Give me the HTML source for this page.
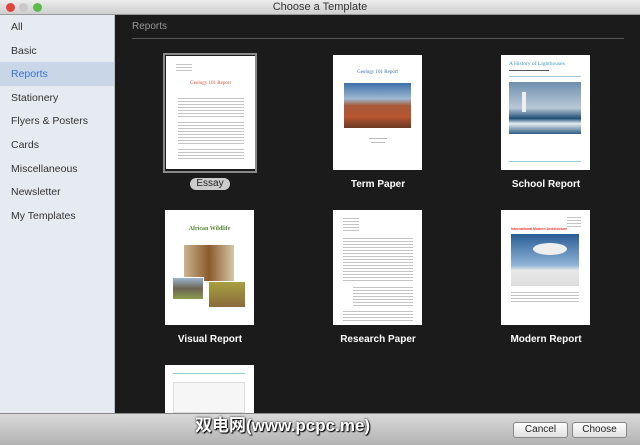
<!DOCTYPE html>
<html><head><meta charset="utf-8"><style>
*{margin:0;padding:0;box-sizing:border-box}
body{width:640px;height:445px;overflow:hidden;font-family:"Lucida Grande","Liberation Sans","Noto Sans CJK SC",sans-serif;background:#1b1b1b;position:relative}
.title{position:absolute;left:0;top:0;width:640px;height:15px;background:linear-gradient(#ececec,#cfcfcf);border-bottom:1px solid #999;text-align:center;font-size:11px;line-height:15px;color:#333}
.dot{position:absolute;top:3px;width:9px;height:9px;border-radius:50%}
.side{position:absolute;left:0;top:15px;width:115px;height:398px;background:#e6ebf1;border-right:1px solid #b9bfc7}
.side div{height:23.6px;line-height:24px;padding-left:11px;font-size:10.5px;color:#333}
.side .sel{background:#c9d6e8;color:#3a73c5}
.main{position:absolute;left:116px;top:15px;width:524px;height:398px;background:#1b1b1b}
.hdr{position:absolute;left:132px;top:21px;font-size:10px;color:#999}
.rule{position:absolute;left:132px;top:38px;width:492px;height:1px;background:#555}
.pg{position:absolute;width:89px;height:115px;background:#fff;overflow:hidden}
.lbl{position:absolute;width:170px;text-align:center;font-size:10px;font-weight:bold;color:#fff}
.ln{position:absolute;height:1px;background:#bbb}
.tx{position:absolute;background:repeating-linear-gradient(#fff 0 2px,#c4c4c4 2px 3px)}
.bot{position:absolute;left:0;top:413px;width:640px;height:32px;background:linear-gradient(#d9d9d9,#b3b3b3);border-top:1px solid #888}
.btn{position:absolute;top:8px;height:16px;border:1px solid #888;border-radius:3px;background:linear-gradient(#fdfdfd,#e0e0e0);font-size:10px;line-height:14px;text-align:center;color:#222}
.wm{position:absolute;left:195px;top:411px;font-size:17px;color:#fff;font-weight:bold;text-shadow:0 0 2px #000,1px 1px 1px #000}
</style></head><body>
<div class="title">Choose a Template
<span class="dot" style="left:6px;background:#e0453d"></span><span class="dot" style="left:19px;background:#c9c9c9"></span><span class="dot" style="left:33px;background:#5cb94a"></span></div>
<div class="side">
<div>All</div><div>Basic</div><div class="sel">Reports</div><div>Stationery</div><div>Flyers &amp; Posters</div><div>Cards</div><div>Miscellaneous</div><div>Newsletter</div><div>My Templates</div>
</div>
<div class="main"></div>
<div class="hdr">Reports</div><div class="rule"></div>

<div style="position:absolute;left:163px;top:53px;width:94px;height:120px;border:2px solid #8a8a8a"></div>
<div class="pg" style="left:166px;top:56px;height:113px">
<div class="tx" style="left:10px;top:6px;width:16px;height:9px"></div>
<div style="position:absolute;top:25px;width:100%;text-align:center;font-size:5px;color:#d9533b;font-family:'Liberation Serif',serif">Geology 101 Report</div>
<div class="tx" style="left:12px;top:40px;width:66px;height:21px"></div>
<div class="tx" style="left:12px;top:64px;width:66px;height:24px"></div>
<div class="tx" style="left:12px;top:91px;width:66px;height:12px"></div>
</div>
<div style="position:absolute;left:190px;top:178px;width:40px;height:12px;border-radius:6px;background:#ccc;font-size:10px;line-height:12px;text-align:center;color:#222">Essay</div>

<div class="pg" style="left:333px;top:55px">
<div style="position:absolute;top:15px;width:100%;text-align:center;font-size:5px;color:#3a6ea5;font-family:'Liberation Serif',serif">Geology 101 Report</div>
<div style="position:absolute;left:11px;top:28px;width:67px;height:45px;background:linear-gradient(#3d6fa8 0%,#9fb8d2 35%,#a65a3a 50%,#b85530 75%,#6a3a24 100%)"></div>
<div class="ln" style="left:36px;top:83px;width:18px"></div><div class="ln" style="left:38px;top:87px;width:14px"></div>
</div>
<div class="lbl" style="left:293px;top:179px">Term Paper</div>

<div class="pg" style="left:501px;top:55px">
<div style="position:absolute;left:8px;top:6px;font-size:5.5px;color:#3a9bc4;font-family:'Liberation Serif',serif;white-space:nowrap">A History of Lighthouses</div>
<div class="ln" style="left:8px;top:15px;width:40px;background:#555"></div>
<div class="ln" style="left:8px;top:21px;width:72px;background:#9cd"></div>
<div style="position:absolute;left:8px;top:27px;width:72px;height:52px;background:linear-gradient(#6f8fae 0%,#b9c9d6 50%,#1f4f76 70%,#e5eef3 80%,#2c5a80 100%)"></div>
<div style="position:absolute;left:21px;top:37px;width:4px;height:20px;background:#eee"></div>
<div class="ln" style="left:8px;top:106px;width:72px;background:#9cd"></div>
</div>
<div class="lbl" style="left:461px;top:179px">School Report</div>

<div class="pg" style="left:165px;top:210px">
<div style="position:absolute;top:16px;width:100%;text-align:center;font-size:6px;font-weight:bold;color:#5a8a3a;font-family:'Liberation Serif',serif">African Wildlife</div>
<div style="position:absolute;left:19px;top:35px;width:50px;height:36px;background:linear-gradient(90deg,#cbb48e,#8a5a2e,#d6c7a8)"></div>
<div style="position:absolute;left:7px;top:67px;width:32px;height:23px;background:linear-gradient(#9cb6d0,#6c6450 50%,#8a9a50);border:1px solid #fff"></div>
<div style="position:absolute;left:43px;top:71px;width:38px;height:27px;background:linear-gradient(#a8a040,#8a6a3c);border:1px solid #fff"></div>
</div>
<div class="lbl" style="left:125px;top:334px">Visual Report</div>

<div class="pg" style="left:333px;top:210px">
<div class="tx" style="left:10px;top:6px;width:16px;height:15px"></div>
<div class="tx" style="left:10px;top:26px;width:70px;height:46px"></div>
<div class="tx" style="left:20px;top:75px;width:60px;height:22px"></div>
<div class="tx" style="left:10px;top:99px;width:70px;height:12px"></div>
</div>
<div class="lbl" style="left:293px;top:334px">Research Paper</div>

<div class="pg" style="left:501px;top:210px">
<div class="tx" style="left:66px;top:5px;width:14px;height:12px"></div>
<div style="position:absolute;left:10px;top:17px;font-size:3.5px;color:#e33;font-weight:bold;white-space:nowrap">International Modern Architecture</div>
<div style="position:absolute;left:10px;top:24px;width:68px;height:52px;background:linear-gradient(#2a5d96,#8fb4d6 60%,#e8e8e8 70%,#ddd)"></div>
<div style="position:absolute;left:32px;top:33px;width:34px;height:12px;border-radius:50%;background:#eee"></div>
<div class="tx" style="left:10px;top:80px;width:68px;height:14px"></div>
</div>
<div class="lbl" style="left:461px;top:334px">Modern Report</div>

<div class="pg" style="left:165px;top:365px;height:48px">
<div class="ln" style="left:8px;top:8px;width:72px;background:#9cd"></div>
<div style="position:absolute;left:8px;top:17px;width:72px;height:31px;border:1px solid #ddd;background:#f6f6f6"></div>
</div>

<div class="bot">
<div class="btn" style="left:513px;width:55px">Cancel</div>
<div class="btn" style="left:572px;width:55px">Choose</div>
</div>
<div class="wm">双电网(www.pcpc.me)</div>
</body></html>
